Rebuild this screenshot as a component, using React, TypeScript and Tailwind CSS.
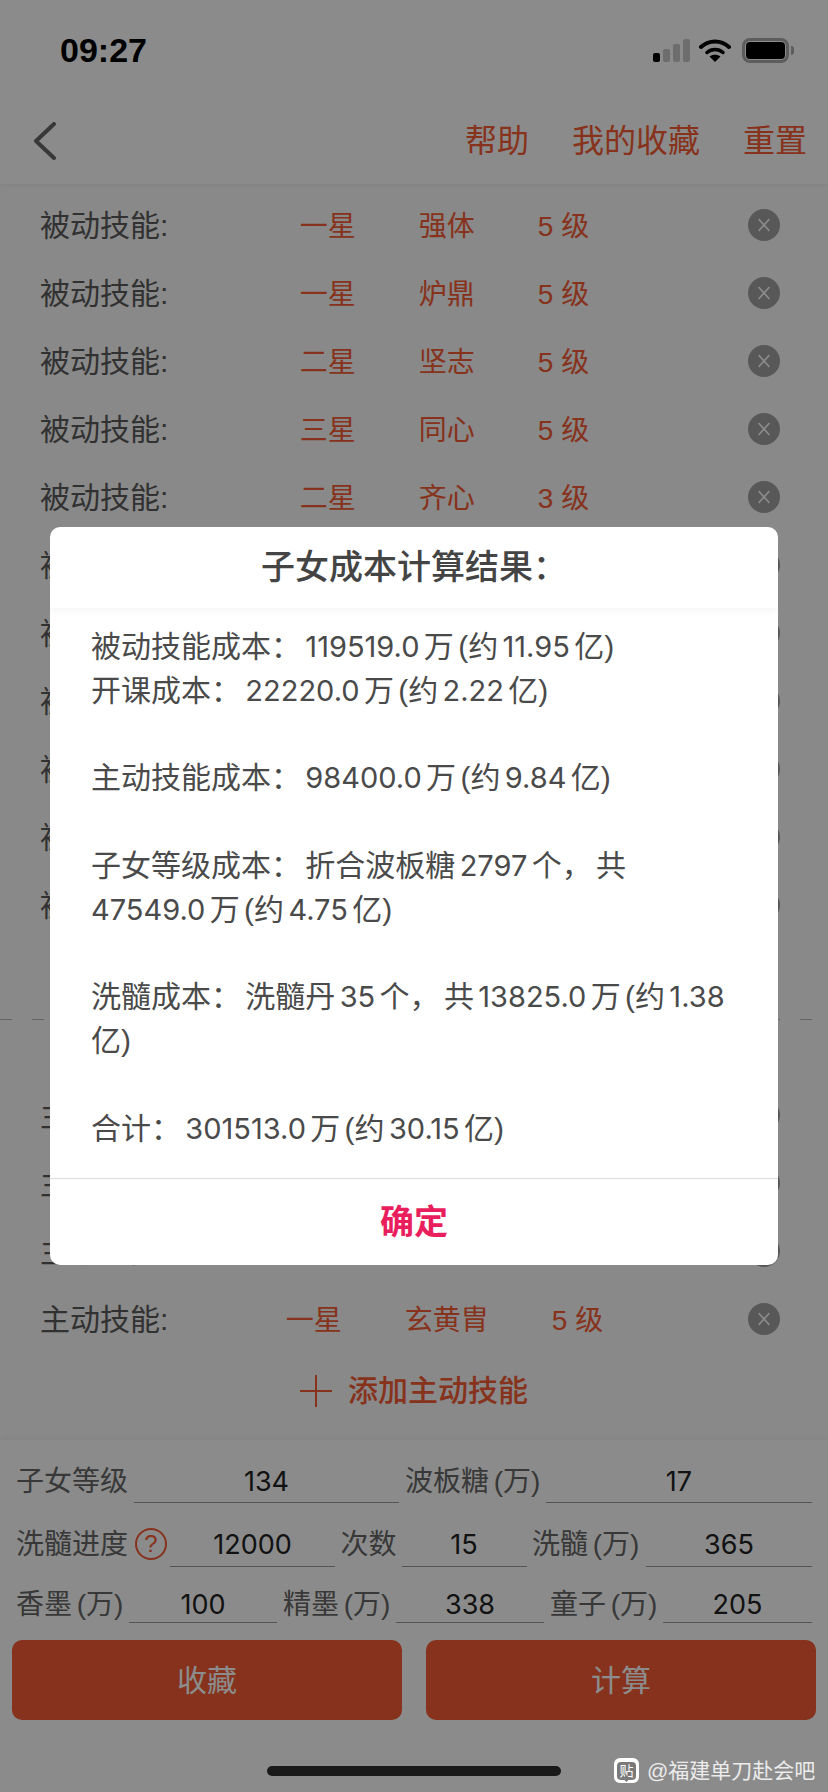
const passiveRows = [
  { star: '一星', name: '强体', level: '5 级' },
  { star: '一星', name: '炉鼎', level: '5 级' },
  { star: '二星', name: '坚志', level: '5 级' },
  { star: '三星', name: '同心', level: '5 级' },
  { star: '二星', name: '齐心', level: '3 级' },
  { star: '', name: '', level: '' },
  { star: '', name: '', level: '' },
  { star: '', name: '', level: '' },
  { star: '', name: '', level: '' },
  { star: '', name: '', level: '' },
  { star: '', name: '', level: '' },
];

const activeRows = [
  { star: '', name: '', level: '' },
  { star: '', name: '', level: '' },
  { star: '', name: '', level: '' },
  { star: '一星', name: '玄黄胄', level: '5 级' },
];

const resultText = `被动技能成本： 119519.0 万 (约 11.95 亿)
开课成本： 22220.0 万 (约 2.22 亿)

主动技能成本： 98400.0 万 (约 9.84 亿)

子女等级成本： 折合波板糖 2797 个， 共 47549.0 万 (约 4.75 亿)

洗髓成本： 洗髓丹 35 个， 共 13825.0 万 (约 1.38 亿)

合计： 301513.0 万 (约 30.15 亿)`;

function StatusBar() {
  return (
    <div className="h-[100px] pl-[60px] pr-[34px] flex items-center justify-between">
      <span className="text-[34px] font-bold text-black leading-none">09:27</span>
      <div className="flex items-center">
        <div className="flex items-end gap-[3px] h-[24px] mr-[9px]">
          <div className="w-[7px] h-[9px] rounded-[2px] bg-black" />
          <div className="w-[7px] h-[13px] rounded-[2px] bg-[#c6c6c6]" />
          <div className="w-[7px] h-[18px] rounded-[2px] bg-[#c6c6c6]" />
          <div className="w-[7px] h-[23px] rounded-[2px] bg-[#c6c6c6]" />
        </div>
        <svg width="32" height="24" viewBox="0 0 32 24" fill="none" className="mr-[11px]">
          <path d="M2 9 C10 1.500 22 1.500 30 9" stroke="#000" strokeWidth="4" strokeLinecap="round" />
          <path d="M8 14.500 C12.500 10.500 19.500 10.500 24 14.500" stroke="#000" strokeWidth="3.500" strokeLinecap="round" />
          <path d="M16 24 L10.500 18.500 C13.500 16 18.500 16 21.500 18.500 Z" fill="#000" />
        </svg>
        <div className="w-[47px] h-[25px] rounded-[8px] border-[3px] border-[#a9a9a9] p-[1px]">
          <div className="w-full h-full rounded-[4px] bg-black" />
        </div>
        <div className="w-[3px] h-[9px] ml-[2px] rounded-r-[3px] bg-[#a9a9a9]" />
      </div>
    </div>
  );
}

function NavBar() {
  return (
    <div className="h-[84px] flex items-center justify-between pl-[33px] pr-[21px] shadow-[0_1px_4px_rgba(0,0,0,0.06)] relative pb-[2px]">
      <svg width="24" height="38" viewBox="0 0 24 38" fill="none">
        <polyline points="21,2 3,19 21,36" stroke="#666" strokeWidth="4" strokeLinecap="round" strokeLinejoin="round" />
      </svg>
      <div className="flex items-center gap-[43px] text-[32px] leading-none text-[#f55b35]">
        <span>帮助</span>
        <span>我的收藏</span>
        <span>重置</span>
      </div>
    </div>
  );
}

function SkillRow({ label, star, name, level }: { label: string; star: string; name: string; level: string }) {
  return (
    <div className="h-[68px] flex items-center pl-[40px] pr-[48px]">
      <div className="w-[130px] pt-[1px] text-[30px] leading-none text-[#5a5a5a] whitespace-nowrap">{label}</div>
      <div className="flex-1 flex justify-center gap-[63px] pr-[29px] pt-[3px] text-[28px] leading-none text-[#f55b35]">
        <span>{star}</span>
        <span>{name}</span>
        <span>{level}</span>
      </div>
      <div className="w-[32px] h-[32px] rounded-full bg-[#a0a0a0] flex items-center justify-center">
        <svg width="16" height="14" viewBox="0 0 16 14" fill="none">
          <path d="M3 1.500 L13 12.500 M13 1.500 L3 12.500" stroke="#fff" strokeWidth="1.600" strokeLinecap="round" />
        </svg>
      </div>
    </div>
  );
}

function AddButton({ text }: { text: string }) {
  return (
    <div className="h-[76px] flex items-center justify-center gap-[16px]">
      <svg width="32" height="32" viewBox="0 0 32 32" fill="none">
        <path d="M16 0 V32 M0 16 H32" stroke="#f55b35" strokeWidth="2" />
      </svg>
      <span className="text-[30px] leading-none font-medium text-[#f55b35]">{text}</span>
    </div>
  );
}

function Field({ label, value, labelWidth, inputWidth, line, help }: { label: string; value: string; labelWidth: string; inputWidth: string; line: string; help?: boolean }) {
  return (
    <div className="flex">
      <div className={`${labelWidth} ${line} h-[42px] text-[28px] text-[#666] whitespace-nowrap flex items-start [word-spacing:-3px]`}>
        {label}
        {help && (
          <span className="ml-[7px] mt-[3px] w-[32px] h-[32px] rounded-full border-[2px] border-[#f55b35] text-[#f55b35] text-[24px] leading-none flex items-center justify-center">?</span>
        )}
      </div>
      <div className={`${inputWidth} ${line} h-[42px] border-b-[1.500px] border-[#999] text-center text-[27px] text-[#222] font-['Inter']`}>{value}</div>
    </div>
  );
}

function BottomPanel() {
  return (
    <div className="h-[352px] px-[16px] pt-[21px] bg-[#fdfefd] shadow-[0_-2px_6px_rgba(0,0,0,0.04)] relative">
      <div className="flex justify-between">
        <Field label="子女等级" value="134" labelWidth="w-[118px]" inputWidth="w-[265px]" line="leading-[41px]" />
        <Field label="波板糖 (万)" value="17" labelWidth="w-[141px]" inputWidth="w-[266px]" line="leading-[41px]" />
      </div>
      <div className="flex justify-between mt-[22px]">
        <Field label="洗髓进度" value="12000" labelWidth="w-[154px]" inputWidth="w-[165px]" line="leading-[40px]" help />
        <Field label="次数" value="15" labelWidth="w-[61px]" inputWidth="w-[125px]" line="leading-[40px]" />
        <Field label="洗髓 (万)" value="365" labelWidth="w-[114px]" inputWidth="w-[166px]" line="leading-[40px]" />
      </div>
      <div className="flex justify-between mt-[14px]">
        <Field label="香墨 (万)" value="100" labelWidth="w-[113px]" inputWidth="w-[148px]" line="leading-[47px]" />
        <Field label="精墨 (万)" value="338" labelWidth="w-[113px]" inputWidth="w-[148px]" line="leading-[47px]" />
        <Field label="童子 (万)" value="205" labelWidth="w-[113px]" inputWidth="w-[149px]" line="leading-[47px]" />
      </div>
      <div className="flex justify-between -mx-[4px] mt-[17px]">
        <button className="w-[390px] h-[80px] rounded-[10px] bg-[#f55b35] text-white text-[30px]">收藏</button>
        <button className="w-[390px] h-[80px] rounded-[10px] bg-[#f55b35] text-white text-[30px]">计算</button>
      </div>
      <div className="absolute left-[267px] top-[326px] w-[294px] h-[10px] rounded-full bg-[#303030]" />
    </div>
  );
}

function ResultDialog() {
  // digits in the reference are proportional and a bit smaller than the CJK text
  const parts = resultText.split(/([0-9.]+)/);
  return (
    <div className="absolute inset-0 bg-black/45 flex items-center justify-center">
      <div className="w-[728px] h-[738px] bg-white rounded-[10px] overflow-hidden flex flex-col">
        <div className="h-[81px] shrink-0 flex items-center justify-center text-[34px] font-medium text-[#444] shadow-[0_2px_10px_rgba(0,0,0,0.05)] relative">
          子女成本计算结果：
        </div>
        <div className="flex-1 px-[41px] pt-[17px] text-[30px] leading-[43.800px] text-[#4a4a4a] whitespace-pre-line [word-spacing:-4px]">
          {parts.map((part, i) =>
            i % 2 === 1 ? (
              <span key={i} className="font-['Inter'] text-[29px] leading-none">{part}</span>
            ) : (
              <span key={i}>{part}</span>
            )
          )}
        </div>
        <div className="h-[87px] shrink-0 border-t border-[#dcdcdc] flex items-center justify-center text-[34px] font-bold text-[#e91e5c]">
          确定
        </div>
      </div>
    </div>
  );
}

export default function App() {
  return (
    <div className="relative w-[828px] h-[1792px] overflow-hidden bg-[#fdfefd] font-['Liberation_Sans','Noto_Sans_CJK_SC',sans-serif]">
      <StatusBar />
      <NavBar />
      <div className="h-[1256px] bg-[#f8f9f8] pt-[7px]">
        {passiveRows.map((row, i) => (
          <SkillRow key={i} label="被动技能:" star={row.star} name={row.name} level={row.level} />
        ))}
        <div className="h-[80px]" />
        <div className="h-px bg-[repeating-linear-gradient(90deg,#b4b4b4_0,#b4b4b4_12px,transparent_12px,transparent_32px)]" />
        <div className="h-[61px]" />
        {activeRows.map((row, i) => (
          <SkillRow key={i} label="主动技能:" star={row.star} name={row.name} level={row.level} />
        ))}
        <AddButton text="添加主动技能" />
      </div>
      <BottomPanel />
      <ResultDialog />
      {/* app watermark sits above the dimmed layer */}
      <div className="absolute left-[614px] top-[1758px] flex items-center gap-[8px]">
        <div className="relative w-[25px] h-[25px] rounded-[6px] bg-white flex items-center justify-center">
          <div className="w-[19px] h-[18px] rounded-[4px] bg-[#7a7a7a] text-[14px] leading-none text-white flex items-center justify-center">贴</div>
          <div className="absolute left-[10px] bottom-[2px] w-[5px] h-[5px] rotate-45 bg-[#7a7a7a]" />
        </div>
        <span className="text-[21px] leading-none text-[#ececec] whitespace-nowrap">@福建单刀赴会吧</span>
      </div>
    </div>
  );
}
